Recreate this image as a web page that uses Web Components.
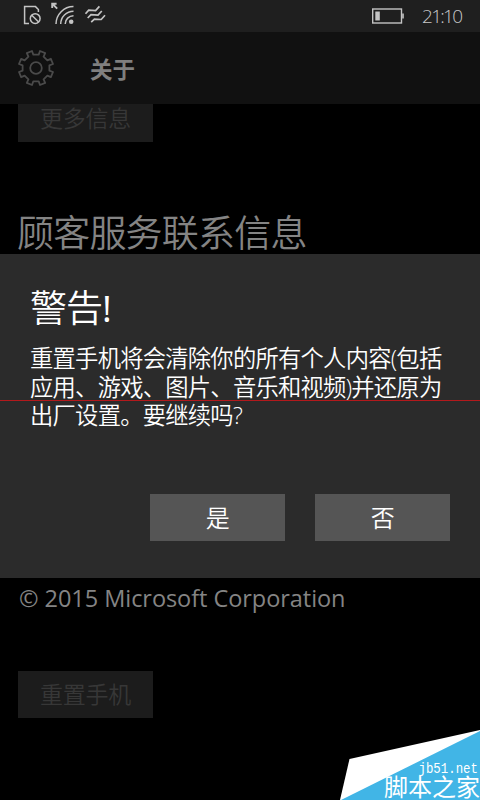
<!DOCTYPE html>
<html lang="zh-CN">
<head>
<meta charset="utf-8">
<title>关于</title>
<style>
    html, body {
        margin: 0;
        height: 100%;
        background: #000;
        overflow: hidden;
    }

    body {
        font-family: "Open Sans", "Noto Sans CJK SC", sans-serif;
        color: #848484;
    }

    .mark { font-weight: 400; }
</style>
</head>
<body>
<about-page>
    <status-bar slot="top" time="21:10"></status-bar>
    <page-header slot="top">关于</page-header>

    <phone-button class="more">更多信息</phone-button>
    <section-title>顾客服务联系信息</section-title>
    <copyright-line>© 2015 Microsoft Corporation</copyright-line>
    <phone-button class="reset">重置手机</phone-button>

    <warning-dialog slot="overlay">
        <span slot="title">警告<span class="mark">!</span></span>
        <span>重置手机将会清除你的所有个人内容(包括<br>应用、游戏、图片、音乐和视频)并还原为<br>出厂设置。要继续吗?</span>
        <phone-button slot="actions" active>是</phone-button>
        <phone-button slot="actions" active>否</phone-button>
    </warning-dialog>
    <site-badge slot="overlay" host="jb51.net">脚本之家</site-badge>
</about-page>

<script>
// small helper, every component uses an open shadow root
class BaseElement extends HTMLElement
{
    constructor(html){
        super();
        const template = document.createElement("template")
        template.innerHTML = html
        this.attachShadow({mode: "open"}).append(template.content.cloneNode(true))
    }
}

class AboutPage extends BaseElement
{
    constructor(){
        super(/*html*/`
        <style>
            :host {
                position: relative;
                display: flex;
                flex-direction: column;
                width: 480px;
                height: 800px;
                overflow: hidden;
            }

            main {
                flex: 1;
                min-height: 0;
                overflow: hidden;
                display: flex;
                flex-direction: column;
                align-items: flex-start;
                padding-left: 18px;
            }

            /* the list is scrolled, so the first button is cut by the header */
            ::slotted(.more) { margin-top: -9px; }
            ::slotted(section-title) { margin-top: 65px; }
            ::slotted(copyright-line) { margin: 323px 0 57px 1px; }

            /* red line across the screen */
            hr {
                position: absolute;
                top: 400px;
                left: 0;
                width: 100%;
                height: 1px;
                margin: 0;
                border: 0;
                background: #b3191c;
            }
        </style>
        <slot name="top"></slot>
        <main><slot></slot></main>
        <slot name="overlay"></slot>
        <hr>
        `)
    }
}

class StatusBar extends BaseElement
{
    constructor(){
        super(/*html*/`
        <style>
            :host {
                display: flex;
                justify-content: space-between;
                flex: none;
                height: 32px;
                background: #1f1f1f;
                color: #c8c8c8;
            }

            svg { display: block; fill: none; stroke: #c4c4c4; }
            .right { display: flex; padding-right: 18px; }
            time { font: 300 19px/32px "Open Sans", sans-serif; letter-spacing: -1.7px; width: 40px; white-space: nowrap; }
        </style>
        <svg width="110" height="32" stroke-width="1.5">
            <!-- sim card with a "no" sign -->
            <path d="M29 23.4H24.6V6.6H35.5L38.4 9.5V12"/>
            <circle cx="35.2" cy="18.6" r="4.9"/>
            <path d="M31.8 15.2L38.6 22"/>
            <!-- wifi -->
            <path d="M52.2 8V3.7H56.6M52.3 3.8L57.2 8.6" stroke-width="1.9"/>
            <path d="M56 24A17.5 17.5 0 0 1 73.5 6.6M60.7 24A12.8 12.8 0 0 1 73.5 11.2M65.2 24A8.3 8.3 0 0 1 73.5 15.7"/>
            <circle cx="71.2" cy="21.7" r="2.3" fill="#c4c4c4" stroke="none"/>
            <!-- vibration -->
            <path stroke-width="1.7" d="M85.5 13.7L88.7 10.1L95.6 10.6L99.4 6.4M87.7 18L91 14.6L98 15.1L101.8 11M91.2 22.2L94.4 19.1L101.2 19.5L105 15.3"/>
        </svg>
        <div class="right">
            <svg width="50" height="32">
                <rect x="0.7" y="9" width="28.8" height="14" stroke-width="1.4"/>
                <rect x="3.3" y="11.5" width="4.5" height="9" fill="#c4c4c4" stroke="none"/>
                <path d="M31 13.5V18.5" stroke-width="1.6"/>
            </svg>
            <time></time>
        </div>
        `)
        this.shadowRoot.querySelector("time").textContent = this.getAttribute("time")
    }
}

class PageHeader extends BaseElement
{
    constructor(){
        super(/*html*/`
        <style>
            :host {
                display: flex;
                align-items: center;
                gap: 36px;
                flex: none;
                height: 72px;
                padding-left: 18px;
                box-sizing: border-box;
                background: #111;
                color: #7f7f7f;
                font-size: 22.5px;
                font-weight: 700;
                line-height: 32px;
            }

            svg { display: block; fill: none; stroke: #4a4a4a; stroke-width: 1.8; stroke-linejoin: round; }
            span { padding-top: 3px; }
        </style>
        <svg width="36" height="36" viewBox="-18 -18 36 36">
            <path></path>
            <circle r="5.8"/>
        </svg>
        <span><slot></slot></span>
        `)
        this.shadowRoot.querySelector("path").setAttribute("d", this.gearPath())
    }

    // eight teeth, each step draws one valley with the tips beside it
    gearPath(){
        const valley = [[-4, -17], [-2.7, -13.4], [2.7, -13.4], [4, -17]]
        const points = []
        for (let i = 0; i < 8; i++) {
            const a = i * Math.PI / 4
            valley.forEach(([x, y]) => {
                points.push((x * Math.cos(a) - y * Math.sin(a)).toFixed(2) + " " + (x * Math.sin(a) + y * Math.cos(a)).toFixed(2))
            })
        }
        return "M" + points.join("L") + "Z"
    }
}

class PhoneButton extends BaseElement
{
    constructor(){
        super(/*html*/`
        <style>
            :host { display: block; flex: none; }

            button {
                display: block;
                width: 135px;
                height: 47px;
                padding: 0;
                border: 0;
                background: #1c1c1c;
                color: #373737;
                font: inherit;
                font-size: 23px;
                font-weight: 350;
                line-height: 47px;
                letter-spacing: -0.3px;
            }

            :host([active]) button { background: #555; color: #fff; font-size: 24px; }
        </style>
        <button><slot></slot></button>
        `)
    }
}

class SectionTitle extends BaseElement
{
    constructor(){
        super(/*html*/`
        <style>
            :host { display: block; margin-left: -1px; font-size: 37px; font-weight: 350; line-height: 52px; letter-spacing: -0.8px; white-space: nowrap; }
        </style>
        <slot></slot>
        `)
    }
}

class CopyrightLine extends BaseElement
{
    constructor(){
        super(/*html*/`
        <style>
            :host { display: block; font: 400 23.5px/32px "Open Sans", sans-serif; letter-spacing: -0.05px; white-space: nowrap; }
        </style>
        <slot></slot>
        `)
    }
}

class WarningDialog extends BaseElement
{
    constructor(){
        super(/*html*/`
        <style>
            :host {
                position: absolute;
                top: 254px;
                left: 0;
                display: flex;
                flex-direction: column;
                width: 480px;
                height: 324px;
                padding: 28px 30px 37px;
                box-sizing: border-box;
                background: #2b2b2b;
                color: #fff;
            }

            h1 { margin: 0; font-size: 37px; font-weight: 350; line-height: 52px; letter-spacing: -1px; }
            p { margin: 10px 0 0; font-size: 23.3px; font-weight: 350; line-height: 28.5px; letter-spacing: -0.75px; white-space: nowrap; }
            footer { display: flex; justify-content: flex-end; gap: 30px; margin-top: auto; }
        </style>
        <h1><slot name="title"></slot></h1>
        <p><slot></slot></p>
        <footer><slot name="actions"></slot></footer>
        `)
    }
}

class SiteBadge extends BaseElement
{
    constructor(){
        super(/*html*/`
        <style>
            :host {
                position: absolute;
                right: 0;
                bottom: 0;
                display: grid;
                width: 140px;
                height: 72px;
                color: #fff;
            }

            svg, div { grid-area: 1 / 1; }
            div { display: flex; flex-direction: column; align-items: flex-end; justify-content: flex-end; white-space: nowrap; }
            small { font: 12.4px/11px "Liberation Mono", monospace; padding: 0 2px 0 0; transform: scaleY(1.2); transform-origin: top; }
            b { font-size: 24px; font-weight: 400; line-height: 26px; }
        </style>
        <svg width="140" height="72">
            <path fill="#fff" d="M9.5 31L140 2V72H0Z"/>
            <path fill="#41b5e6" d="M1 72L140 3V72Z"/>
        </svg>
        <div><small></small><b><slot></slot></b></div>
        `)
        this.shadowRoot.querySelector("small").textContent = this.getAttribute("host")
    }
}

customElements.define('about-page', AboutPage);
customElements.define('status-bar', StatusBar);
customElements.define('page-header', PageHeader);
customElements.define('phone-button', PhoneButton);
customElements.define('section-title', SectionTitle);
customElements.define('copyright-line', CopyrightLine);
customElements.define('warning-dialog', WarningDialog);
customElements.define('site-badge', SiteBadge);
</script>
</body>
</html>
